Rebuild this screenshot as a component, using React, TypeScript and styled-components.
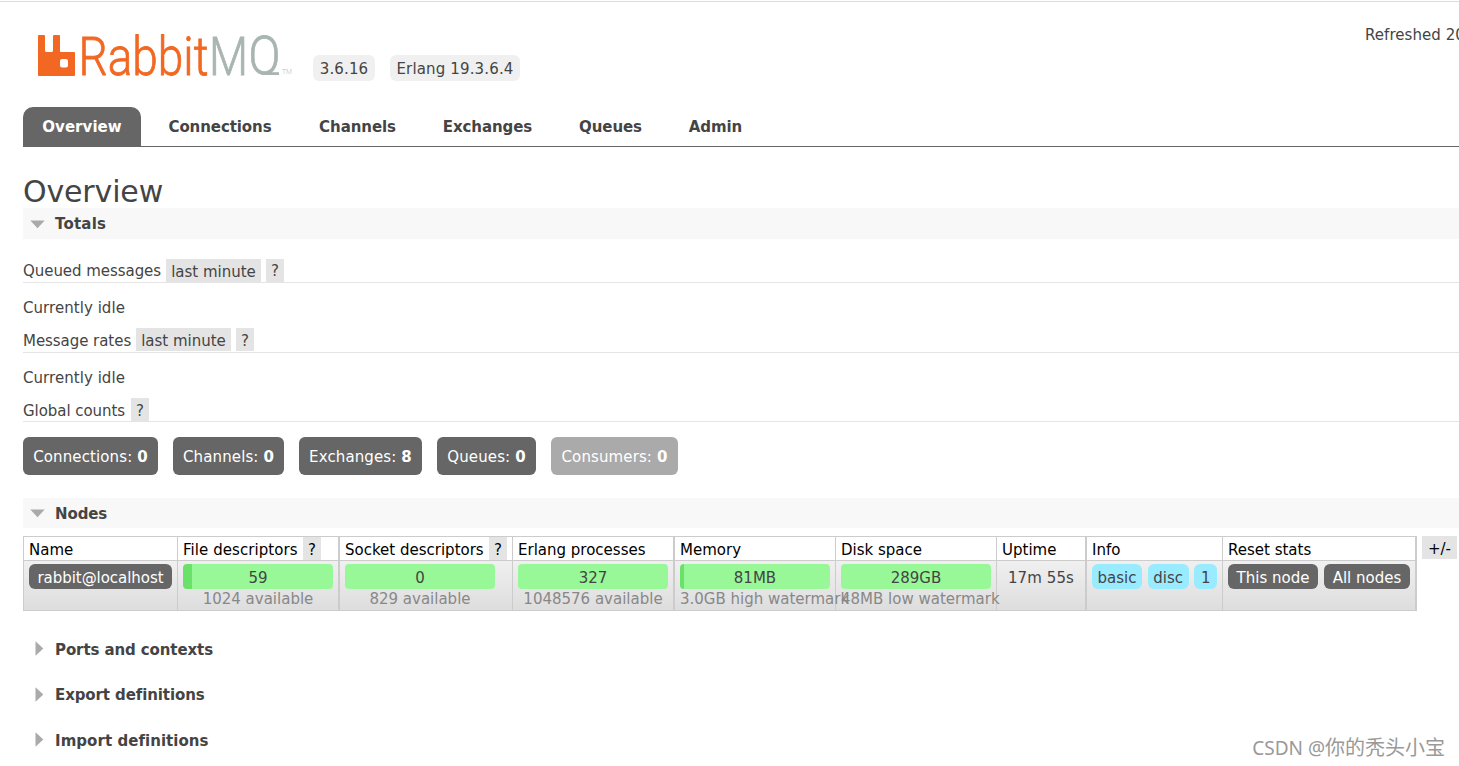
import React from "react";
import styled, { createGlobalStyle } from "styled-components";

const GlobalStyle = createGlobalStyle`
  * { box-sizing: border-box; }
  body {
    margin: 0;
    background: #fff;
    color: #444;
    font: 15px/20px Verdana, "DejaVu Sans", sans-serif;
    overflow: hidden;
  }
`;

const Page = styled.div`
  position: relative;
  width: 100%;
  height: 766px;
  padding-top: 1px;
  overflow: hidden;
  white-space: nowrap;
`;

const Header = styled.header`
  display: flex;
  height: 106px;
  border-top: 1px solid #ddd;
  padding-left: 37px;
`;

const Logo = styled.svg`
  display: block;
  width: 260px;
  height: 50px;
  margin-top: 30px;
  flex: none;
  overflow: visible;
`;

const Versions = styled.div`
  display: flex;
  gap: 15px;
  margin: 53px 0 0 16px;
`;

const Version = styled.span<{ $w: number }>`
  width: ${(p) => p.$w}px;
  height: 26px;
  line-height: 28px;
  border-radius: 6px;
  background: #f0f0f0;
  text-align: center;
  letter-spacing: 0.15px;
`;

const Refreshed = styled.div`
  width: 94px;
  margin: 23px 0 0 auto;
  overflow: hidden;
  letter-spacing: 0.05px;
`;

const Tabs = styled.nav`
  display: flex;
  gap: 7px;
  height: 40px;
  margin-left: 23px;
  border-bottom: 1px solid #666;
`;

const Tab = styled.a<{ $w: number; $active?: boolean; $ls?: number }>`
  width: ${(p) => p.$w}px;
  height: 39px;
  line-height: 40px;
  border-radius: 10px 10px 0 0;
  text-align: center;
  font-weight: bold;
  letter-spacing: ${(p) => p.$ls ?? -0.08}px;
  color: ${(p) => (p.$active ? "#fff" : "#444")};
  background: ${(p) => (p.$active ? "#666" : "transparent")};
`;

const Main = styled.main`
  padding: 26px 0 0 23px;
`;

const Title = styled.h1`
  margin: 0;
  height: 35px;
  font-size: 30px;
  line-height: 37px;
  font-weight: normal;
  letter-spacing: -0.15px;
`;

const SectionTitle = styled.h2<{ $open?: boolean; $h?: number; $ls?: number }>`
  display: flex;
  align-items: center;
  gap: ${(p) => (p.$open ? 10 : 11)}px;
  height: ${(p) => p.$h ?? 31}px;
  margin: 0;
  padding: ${(p) => (p.$open ? "1px 0 0 7px" : "0 0 0 12px")};
  background: ${(p) => (p.$open ? "#f8f8f8" : "transparent")};
  font-size: 15px;
  font-weight: bold;
  letter-spacing: ${(p) => p.$ls ?? -0.1}px;
`;

const Collapsed = styled.section`
  display: flex;
  flex-direction: column;
  gap: 14.5px;
  margin-top: 23px;
`;

const Totals = styled.section`
  padding-top: 18px;
`;

const StatHeading = styled.h3<{ $h?: number; $lh?: number; $gap?: number }>`
  display: flex;
  align-items: flex-end;
  height: ${(p) => p.$h ?? 26}px;
  margin: 0;
  padding-bottom: ${(p) => p.$gap ?? 0}px;
  font-size: 15px;
  line-height: ${(p) => p.$lh ?? 26}px;
  font-weight: normal;
  border-bottom: 1px solid #e4e4e4;
`;

const Label = styled.span<{ $w: number }>`
  width: ${(p) => p.$w}px;
  height: 23px;
  letter-spacing: -0.05px;
`;

const Range = styled.span`
  width: 95px;
  height: 23px;
  margin-right: 5px;
  line-height: 26px;
  text-align: center;
  background: #e4e4e4;
`;

const Help = styled.span`
  flex: none;
  width: 18px;
  height: 23px;
  text-align: center;
  background: #e4e4e4;
`;

const Idle = styled.p`
  height: 44px;
  margin: 0;
  padding-top: 15px;
  letter-spacing: 0.05px;
`;

const Counts = styled.div`
  display: flex;
  gap: 15px;
  padding: 15px 0 23px;
`;

const Count = styled.div<{ $w: number; $off?: boolean }>`
  width: ${(p) => p.$w}px;
  height: 38px;
  line-height: 40px;
  border-radius: 6px;
  text-align: center;
  color: #fff;
  background: ${(p) => (p.$off ? "#aaa" : "#666")};
  letter-spacing: 0.12px;
`;

const TableRow = styled.div`
  display: flex;
  gap: 5px;
  padding-top: 8px;
`;

const Table = styled.table`
  width: 1394px;
  flex: none;
  table-layout: fixed;
  border-collapse: separate;
  border-spacing: 0;
  border-top: 1px solid #ccc;
  border-left: 1px solid #ccc;
`;

const Th = styled.th<{ $b?: number }>`
  height: 24px;
  padding: 0 0 0 5px;
  border-right: ${(p) => p.$b ?? 1}px solid #ccc;
  border-bottom: 1px solid #ccc;
  color: #000;
  font-weight: normal;
  text-align: left;
`;

const HeadText = styled.div`
  display: flex;
  gap: 5px;
  height: 23px;
  line-height: 26px;
`;

const HeadLabel = styled.span<{ $w?: number; $ls?: number }>`
  width: ${(p) => (p.$w ? p.$w + "px" : "auto")};
  letter-spacing: ${(p) => p.$ls ?? 0}px;
`;

const Body = styled.tr`
  background: linear-gradient(#f0f0f0, #ddd);
`;

const Td = styled.td<{ $b?: number }>`
  height: 50px;
  padding: 3px 0 0 5px;
  vertical-align: top;
  border-right: ${(p) => p.$b ?? 1}px solid #ccc;
  border-bottom: 1px solid #ccc;
`;

const Bar = styled.div<{ $used: number }>`
  width: 150px;
  height: 25px;
  line-height: 28px;
  border-radius: 4px;
  text-align: center;
  background: linear-gradient(to right, #6ae26a ${(p) => p.$used}px, #98f898 ${(p) => p.$used}px);
`;

const Sub = styled.div<{ $start?: boolean }>`
  width: 150px;
  line-height: 20px;
  text-align: ${(p) => (p.$start ? "left" : "center")};
  color: #888;
`;

const Pills = styled.div<{ $gap?: number }>`
  display: flex;
  gap: ${(p) => p.$gap ?? 6}px;
`;

const Pill = styled.span<{ $w: number; $blue?: boolean; $ls?: number }>`
  width: ${(p) => p.$w}px;
  height: 25px;
  line-height: 28px;
  border-radius: 6px;
  text-align: center;
  color: ${(p) => (p.$blue ? "#444" : "#fff")};
  background: ${(p) => (p.$blue ? "#99ebff" : "#666")};
  letter-spacing: ${(p) => p.$ls ?? 0}px;
`;

const Uptime = styled.div`
  padding-left: 6px;
  line-height: 28px;
  letter-spacing: 0.08px;
`;

const Columns = styled.span`
  width: 35px;
  height: 23px;
  line-height: 26px;
  text-align: center;
  color: #000;
  background: #e4e4e4;
`;

const Credit = styled.div`
  position: absolute;
  right: 14px;
  bottom: 6px;
  font: 19px/24px "Noto Sans", "Noto Sans CJK SC", sans-serif;
  color: #999;
`;

const CreditName = styled.span`
  font-size: 20px;
`;

const Down = () => (
  <svg width="15" height="9" viewBox="0 0 15 9"><path d="M0.3 0.5H14.7L7.5 8.3Z" fill="#aaa" /></svg>
);
const Right = () => (
  <svg width="9" height="17" viewBox="0 0 9 17"><path d="M0.5 0.3V14.7L8.3 7.5Z" fill="#aaa" /></svg>
);

const nodeStats = [
  { name: "File descriptors", help: true, w: 162, b: 2, lw: 115, ls: 0.06, value: "59", used: 9, sub: "1024 available" },
  { name: "Socket descriptors", help: true, w: 173, b: 1, lw: 139, value: "0", used: 0, sub: "829 available" },
  { name: "Erlang processes", w: 162, b: 2, value: "327", used: 0, sub: "1048576 available" },
  { name: "Memory", w: 161, b: 1, value: "81MB", used: 4, sub: "3.0GB high watermark", start: true },
  { name: "Disk space", w: 161, b: 1, value: "289GB", used: 0, sub: "48MB low watermark", start: true },
];

export default function App() {
  return (
    <>
      <GlobalStyle />
      <Page>
        <Header>
          <Logo viewBox="37 32 260 50">
            <clipPath id="above-baseline"><path d="M245 25H290V75H245Z" /></clipPath>
            <path fill="#f26822" fillRule="evenodd" d="M39 35H44Q45 35 45 36V50.500Q45 52 46.500 52H51.500Q53 52 53 50.500V36Q53 35 54 35H59Q60 35 60 36V51Q60 52 61 52H74Q75 52 75 53V75Q75 76 74 76H39Q38 76 38 75V36Q38 35 39 35ZM62 59Q60 59 60 61V65.500Q60 67.500 62 67.500H66Q68 67.500 68 65.500V61Q68 59 66 59Z" />
            <g fontFamily="Roboto, sans-serif" fontWeight="300" fontSize="54.500" strokeWidth="0.8">
              <text x="78.500" y="75" fill="#f26822" stroke="#f26822" textLength="130" lengthAdjust="spacingAndGlyphs">Rabbit</text>
              <g fill="#a9b5b0" stroke="#a9b5b0">
                <text x="209" y="75" textLength="39" lengthAdjust="spacingAndGlyphs">M</text>
                <g clipPath="url(#above-baseline)">
                  <text x="248.500" y="74.200" textLength="32" lengthAdjust="spacingAndGlyphs">Q</text>
                </g>
                <path d="M264 73.600H279" strokeWidth="2.800" />
              </g>
            </g>
            <text x="282" y="74" fill="#b8c0bc" fontFamily="Roboto, sans-serif" fontWeight="300" fontSize="8" textLength="10" lengthAdjust="spacingAndGlyphs">TM</text>
          </Logo>
          <Versions>
            <Version $w={62}>3.6.16</Version>
            <Version $w={130}>Erlang 19.3.6.4</Version>
          </Versions>
          <Refreshed>Refreshed 2020</Refreshed>
        </Header>
        <Tabs>
          <Tab $w={118} $active $ls={0.05}>Overview</Tab>
          <Tab $w={144}>Connections</Tab>
          <Tab $w={117}>Channels</Tab>
          <Tab $w={129}>Exchanges</Tab>
          <Tab $w={103}>Queues</Tab>
          <Tab $w={93}>Admin</Tab>
        </Tabs>
        <Main>
          <Title>Overview</Title>
          <SectionTitle $open $ls={0.2}><Down />Totals</SectionTitle>
          <Totals>
            <StatHeading $lh={24}><Label $w={143}>Queued messages</Label><Range>last minute</Range><Help>?</Help></StatHeading>
            <Idle>Currently idle</Idle>
            <StatHeading $gap={1}><Label $w={113}>Message rates</Label><Range>last minute</Range><Help>?</Help></StatHeading>
            <Idle>Currently idle</Idle>
            <StatHeading $h={25}><Label $w={108}>Global counts</Label><Help>?</Help></StatHeading>
            <Counts>
              <Count $w={135}>Connections: <b>0</b></Count>
              <Count $w={111}>Channels: <b>0</b></Count>
              <Count $w={123}>Exchanges: <b>8</b></Count>
              <Count $w={99}>Queues: <b>0</b></Count>
              <Count $w={127} $off>Consumers: <b>0</b></Count>
            </Counts>
          </Totals>
          <SectionTitle $open $h={30}><Down />Nodes</SectionTitle>
          <TableRow>
            <Table>
              <colgroup>
                <col style={{ width: 154 }} />
                {nodeStats.map((s) => <col key={s.name} style={{ width: s.w }} />)}
                <col style={{ width: 90 }} />
                <col style={{ width: 136 }} />
                <col style={{ width: 194 }} />
              </colgroup>
              <thead>
                <tr>
                  <Th><HeadText>Name</HeadText></Th>
                  {nodeStats.map((s) => (
                    <Th key={s.name} $b={s.b}>
                      <HeadText><HeadLabel $w={s.lw} $ls={s.ls}>{s.name}</HeadLabel>{s.help && <Help>?</Help>}</HeadText>
                    </Th>
                  ))}
                  <Th $b={2}><HeadText>Uptime</HeadText></Th>
                  <Th><HeadText>Info</HeadText></Th>
                  <Th $b={2}><HeadText>Reset stats</HeadText></Th>
                </tr>
              </thead>
              <tbody>
                <Body>
                  <Td><Pill as="div" $w={143} $ls={-0.05}>rabbit@localhost</Pill></Td>
                  {nodeStats.map((s) => (
                    <Td key={s.name} $b={s.b}>
                      <Bar $used={s.used}>{s.value}</Bar>
                      <Sub $start={s.start}>{s.sub}</Sub>
                    </Td>
                  ))}
                  <Td $b={2}><Uptime>17m 55s</Uptime></Td>
                  <Td><Pills $gap={5.6}><Pill $blue $w={50}>basic</Pill><Pill $blue $w={41}>disc</Pill><Pill $blue $w={23}>1</Pill></Pills></Td>
                  <Td $b={2}><Pills><Pill $w={90}>This node</Pill><Pill $w={86}>All nodes</Pill></Pills></Td>
                </Body>
              </tbody>
            </Table>
            <Columns>+/-</Columns>
          </TableRow>
          <Collapsed>
            <SectionTitle><Right />Ports and contexts</SectionTitle>
            <SectionTitle><Right />Export definitions</SectionTitle>
            <SectionTitle $ls={0.05}><Right />Import definitions</SectionTitle>
          </Collapsed>
        </Main>
        <Credit>CSDN @<CreditName>你的秃头小宝</CreditName></Credit>
      </Page>
    </>
  );
}
